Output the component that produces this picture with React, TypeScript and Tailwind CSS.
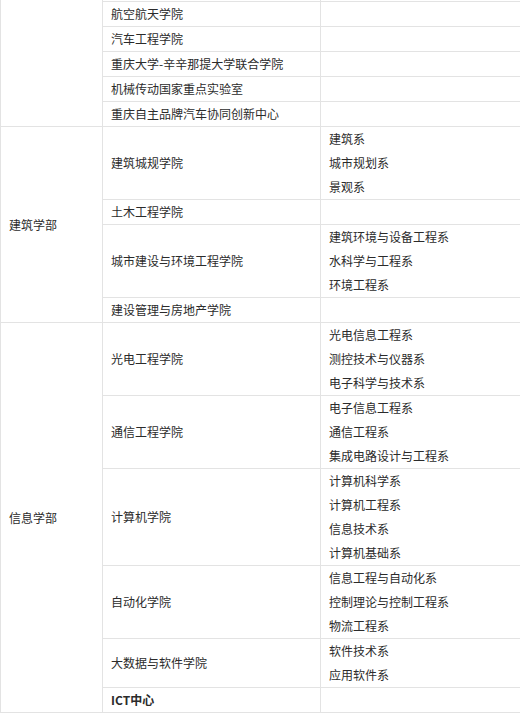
type College = { name: string; depts: string[]; bold?: boolean }
type Division = { name: string; colleges: College[] }

const divisions: Division[] = [
  {
    name: "",
    colleges: [
      { name: "", depts: [] },
      { name: "航空航天学院", depts: [] },
      { name: "汽车工程学院", depts: [] },
      { name: "重庆大学-辛辛那提大学联合学院", depts: [] },
      { name: "机械传动国家重点实验室", depts: [] },
      { name: "重庆自主品牌汽车协同创新中心", depts: [] },
    ],
  },
  {
    name: "建筑学部",
    colleges: [
      { name: "建筑城规学院", depts: ["建筑系", "城市规划系", "景观系"] },
      { name: "土木工程学院", depts: [] },
      { name: "城市建设与环境工程学院", depts: ["建筑环境与设备工程系", "水科学与工程系", "环境工程系"] },
      { name: "建设管理与房地产学院", depts: [] },
    ],
  },
  {
    name: "信息学部",
    colleges: [
      { name: "光电工程学院", depts: ["光电信息工程系", "测控技术与仪器系", "电子科学与技术系"] },
      { name: "通信工程学院", depts: ["电子信息工程系", "通信工程系", "集成电路设计与工程系"] },
      { name: "计算机学院", depts: ["计算机科学系", "计算机工程系", "信息技术系", "计算机基础系"] },
      { name: "自动化学院", depts: ["信息工程与自动化系", "控制理论与控制工程系", "物流工程系"] },
      { name: "大数据与软件学院", depts: ["软件技术系", "应用软件系"] },
      { name: "ICT中心", depts: [], bold: true },
    ],
  },
]

const cell = "border border-[#e3e3e3] px-2 py-0 align-middle leading-[24px] text-left"

export default function App() {
  return (
    <div
      className="w-[520px] h-[715px] overflow-hidden bg-white text-[12px] text-[#2b2b2b]"
      style={{ fontFamily: '"Noto Sans CJK SC", "Microsoft YaHei", sans-serif' }}
    >
      <table className="-mt-[23px] w-[520px] table-fixed border-collapse">
        <colgroup>
          <col className="w-[102px]" />
          <col className="w-[218px]" />
          <col className="w-[200px]" />
        </colgroup>
        <tbody>
          {divisions.map((d, di) =>
            d.colleges.map((c, ci) => (
              <tr key={`${di}-${ci}`}>
                {ci === 0 && (
                  <td rowSpan={d.colleges.length} className={cell}>
                    {d.name}
                  </td>
                )}
                <td className={`${cell} h-[24px] ${c.bold ? "font-bold" : ""}`}>{c.name}</td>
                <td className={`${cell} h-[24px]`}>
                  {c.depts.map((dep) => (
                    <div key={dep} className="h-[24px]">
                      {dep}
                    </div>
                  ))}
                </td>
              </tr>
            ))
          )}
        </tbody>
      </table>
    </div>
  )
}
